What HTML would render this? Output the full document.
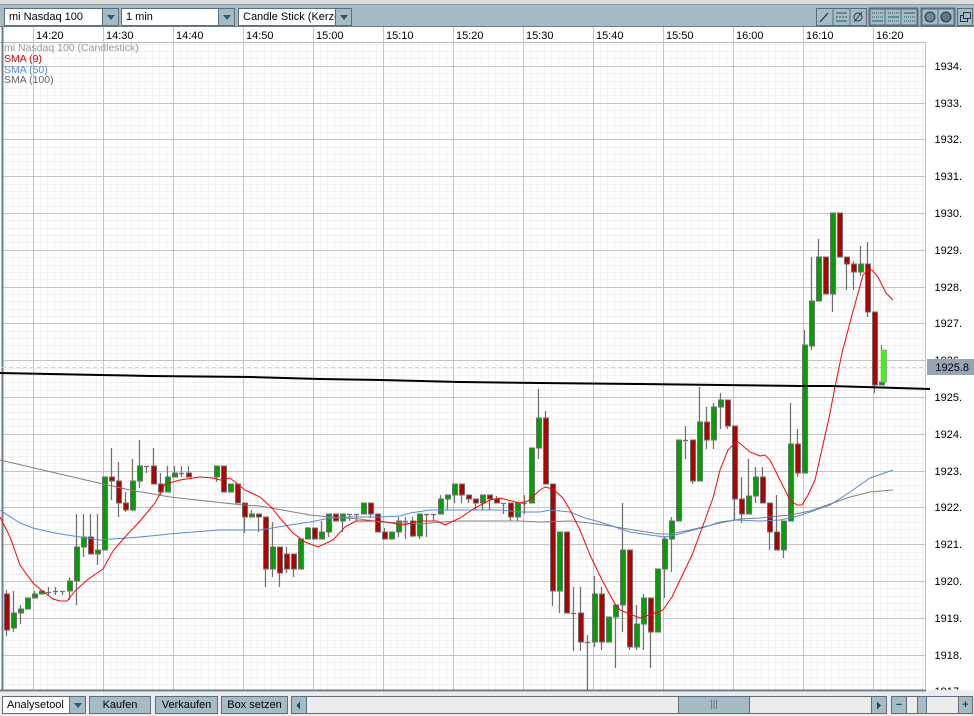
<!DOCTYPE html>
<html><head><meta charset="utf-8"><style>
*{margin:0;padding:0;box-sizing:border-box}
body{width:974px;height:716px;overflow:hidden;background:#ececec;font-family:"Liberation Sans",sans-serif;font-size:11px;position:relative}
.a{position:absolute}
.dd{position:absolute;top:8px;height:18px;background:#fff;border:1px solid #5c6c7c;font-size:11px;line-height:16px;padding-left:4px;color:#000;overflow:hidden;white-space:nowrap}
.dd .ar{position:absolute;right:0;top:0;width:16px;height:16px;background:#a6bcc4;border-left:1px solid #5c6c7c}
.dd .ar:after{content:"";position:absolute;left:4px;top:6px;border-left:4px solid transparent;border-right:4px solid transparent;border-top:5px solid #2a5a70}
.btn{position:absolute;top:696px;height:18px;background:#a6bcc4;border:1px solid #5c6c7c;text-align:center;line-height:16px;font-size:11px}
</style></head><body>
<div class="a" style="left:0;top:0;width:974px;height:5px;background:#dcdcdc;border-bottom:1px solid #8a9aa6"></div>
<div class="a" style="left:0;top:5px;width:974px;height:22px;background:#a6bcc4;border-bottom:1px solid #6c7c8a"></div>
<div class="dd" style="left:4px;width:115px">mi Nasdaq 100<div class="ar"></div></div>
<div class="dd" style="left:121px;width:114px">1 min<div class="ar"></div></div>
<div class="dd" style="left:238px;width:114px">Candle Stick (Kerze<div class="ar"></div></div>
<svg class="a" style="left:815px;top:7px" width="159" height="20">
<rect x="1.5" y="1.5" width="50" height="17" fill="none" stroke="#5c6c7c"/>
<line x1="18" y1="2" x2="18" y2="18" stroke="#5c6c7c"/><line x1="35" y1="2" x2="35" y2="18" stroke="#5c6c7c"/>
<line x1="5" y1="15" x2="13" y2="6" stroke="#1a3a50" stroke-width="1.3"/>
<line x1="21" y1="6" x2="32" y2="6" stroke="#1a5a70"/><line x1="21" y1="10" x2="32" y2="10" stroke="#1a5a70" stroke-dasharray="2 1"/><line x1="21" y1="14" x2="32" y2="14" stroke="#1a5a70"/>
<circle cx="43" cy="10" r="4" fill="none" stroke="#1a3a50"/><line x1="39" y1="15" x2="47" y2="5" stroke="#1a3a50"/>
<rect x="54.5" y="1.5" width="48" height="17" fill="#a6bcc4" stroke="#5c6c7c" stroke-width="2"/>
<line x1="70" y1="2" x2="70" y2="18" stroke="#5c6c7c"/><line x1="86" y1="2" x2="86" y2="18" stroke="#5c6c7c"/>
<g stroke="#1a5a70"><line x1="57" y1="6" x2="68" y2="6" stroke-dasharray="1 1"/><line x1="57" y1="10" x2="68" y2="10" stroke-dasharray="1 1"/><line x1="57" y1="14" x2="68" y2="14"/>
<line x1="73" y1="6" x2="84" y2="6" stroke-dasharray="1 1"/><line x1="73" y1="10" x2="84" y2="10"/><line x1="73" y1="14" x2="84" y2="14" stroke-dasharray="1 1"/>
<line x1="89" y1="6" x2="100" y2="6"/><line x1="89" y1="10" x2="100" y2="10" stroke-dasharray="1 1"/><line x1="89" y1="14" x2="100" y2="14" stroke-dasharray="1 1"/></g>
<rect x="106.5" y="1.5" width="33" height="17" fill="#a6bcc4" stroke="#5c6c7c" stroke-width="2"/>
<line x1="123" y1="2" x2="123" y2="18" stroke="#5c6c7c"/>
<circle cx="115" cy="10" r="5" fill="#6a8a9a" stroke="#1a3a50"/><circle cx="131" cy="10" r="5" fill="#5a7a8a" stroke="#1a3a50"/>
<rect x="142.5" y="1.5" width="15" height="17" fill="#a6bcc4" stroke="#5c6c7c"/>
<rect x="145.5" y="8.5" width="7" height="6" fill="none" stroke="#1a3a50"/><rect x="148.5" y="5.5" width="7" height="6" fill="#a6bcc4" stroke="#1a3a50"/>
</svg>
<svg class="a" style="left:0;top:27px" width="974" height="665" id="ch"></svg>
<div class="a" style="left:4px;top:43px;color:#999;font-size:10.5px;line-height:10.8px">mi Nasdaq 100 (Candlestick)<br><span style="color:#e00000">SMA (9)</span><br><span style="color:#5a8ad8">SMA (50)</span><br><span style="color:#666">SMA (100)</span></div>
<div class="dd" style="left:2px;top:696px;width:84px;height:18px">Analysetool<div class="ar"></div></div>
<div class="btn" style="left:89px;width:62px">Kaufen</div>
<div class="btn" style="left:155px;width:63px">Verkaufen</div>
<div class="btn" style="left:221px;width:67px">Box setzen</div>
<div class="btn" style="left:291px;width:16px"></div>
<svg class="a" style="left:296px;top:701px" width="6" height="9"><path d="M4 0.5 L0.5 4.5 L4 8.5Z" fill="#1a4a60"/></svg>
<div class="a" style="left:307px;top:696px;width:580px;height:18px;border:1px solid #5c6c7c;border-left:none;background:#ececec"></div>
<div class="a" style="left:678px;top:696px;width:72px;height:18px;background:#a6bcc4;border:1px solid #5c6c7c;text-align:center;line-height:15px;color:#5c6c7c;font-size:10px">|||</div>
<div class="btn" style="left:871px;width:16px"></div>
<svg class="a" style="left:876px;top:701px" width="6" height="9"><path d="M1 0.5 L5 4.5 L1 8.5Z" fill="#1a4a60"/></svg>
<div class="a" style="left:891px;top:696px;width:82px;height:18px;border:1px solid #5c6c7c;background:#ececec"></div>
<div class="btn" style="left:891px;width:16px;font-weight:bold;color:#1a4a60">−</div>
<div class="btn" style="left:917px;width:10px"></div>
<div class="btn" style="left:958px;width:15px;font-weight:bold;color:#1a4a60">+</div>
<script>
var s='';
var Y=function(p){return 213+(1930-p)*36.8-27;};
s+='<rect x="0" y="0" width="974" height="665" fill="#fff"/>';
for(var x=5;x<926;x+=7)s+='<line x1="'+x+'.5" y1="15" x2="'+x+'.5" y2="663" stroke="#f2f2f2"/>';
for(var p=1935;p>1916;p-=0.2){var y=Math.round(Y(p));if(y>15&&y<664)s+='<line x1="2" y1="'+y+'.5" x2="925" y2="'+y+'.5" stroke="#f0f0f0"/>';}
for(var p=1935;p>=1917;p--){var y=Math.round(Y(p));if(y>15&&y<664)s+='<line x1="2" y1="'+y+'.5" x2="925" y2="'+y+'.5" stroke="#c4c4c4"/>';
 if(p<1935&&y>20){s+='<text x="962" y="'+(y+4)+'" text-anchor="end" font-size="11" font-family="Liberation Sans">'+p+'.</text>';}}
s+='<line x1="0" y1="15.5" x2="926" y2="15.5" stroke="#b8b8b8"/>';
var tl=['14:20','14:30','14:40','14:50','15:00','15:10','15:20','15:30','15:40','15:50','16:00','16:10','16:20'];
for(var i=0;i<13;i++){var x=33+70*i;s+='<line x1="'+x+'.5" y1="0" x2="'+x+'.5" y2="663" stroke="#c4c4c4"/>';
 s+='<text x="'+(x+3)+'" y="12" font-size="11" font-family="Liberation Sans">'+tl[i]+'</text>';}
s+='<line x1="2.5" y1="0" x2="2.5" y2="663" stroke="#6c7c8a" stroke-width="2"/>';
s+='<line x1="925.5" y1="15" x2="925.5" y2="663" stroke="#b8c8d0"/>';
s+='<line x1="0" y1="663.5" x2="926" y2="663.5" stroke="#6c7c8a" stroke-width="2"/>';
var yp=367-27;s+='<line x1="2" y1="'+yp+'.5" x2="925" y2="'+yp+'.5" stroke="#c8d4e4" stroke-dasharray="4 3"/>';
var C=[[0,594,630,590,636,'r'],[1,628,613,591,632],[2,613,609,605,624],[3,609,598,598,609],[4,598,594,591,598],[5,594,591,591,594],[6,592,592,587,595],[7,591,591,587,595],[8,591,591,591,595],
[9,591,581,577,600],[10,581,547,514,605],[11,547,537,514,557],[12,537,554,514,554],[13,554,550,514,565],[14,550,477,477,550],[15,477,481,448,500],[16,481,503,462,517],[17,503,510,492,512],[18,510,481,459,511],[19,481,466,440,488],[20,466,466,466,473],[21,466,484,448,484],[22,484,492,473,495],[23,492,477,466,492],[24,477,473,466,477],[25,473,473,466,477],[26,473,477,466,477],
[30,477,466,466,482],[31,466,492,466,492],[32,492,484,484,492],[33,484,503,484,503],[34,503,517,503,533],[35,517,514,510,517],[36,514,517,514,532],[37,517,569,517,587],[38,569,547,522,577],[39,547,573,547,587],[40,554,569,547,573],[41,554,569,554,577],[42,569,539,539,569],[43,539,528,527,539],[44,528,539,528,539],
[45,539,532,521,539],[46,532,514,514,537],[47,514,521,514,521],[48,521,514,514,532],[49,514,514,514,521],[50,514,514,514,521],[51,514,503,503,514],[52,503,514,503,518],[53,514,532,514,532],[54,532,539,528,539],[55,539,532,532,539],[56,532,521,517,537],[57,521,521,517,539],[58,521,536,517,537],[59,536,514,514,539],[60,514,514,514,537],[61,514,514,514,521],[62,514,499,495,514],[63,499,495,495,510],
[64,495,484,484,503],[65,484,495,484,503],[66,495,499,495,503],[67,499,503,499,510],[68,503,495,495,510],[69,495,499,495,510],[70,499,503,496,503],[71,503,503,503,514],[72,503,517,503,521],[73,517,503,503,521],[74,503,503,495,514],[75,503,448,448,503],[76,448,418,389,459],[77,418,484,411,484],[78,484,591,484,606],[79,591,532,532,613],[80,532,613,532,613],[81,613,613,587,651],[82,613,642,587,651],[83,642,642,635,690],
[84,642,594,576,647],[85,594,642,587,650],[86,642,617,617,642],[87,617,605,605,668],[88,605,550,503,632],[89,550,647,550,650],[90,647,624,605,650],[91,624,598,594,650],[92,598,632,598,668],[93,632,569,569,632],[94,569,539,536,598],[95,539,521,517,572],[96,521,440,440,521],[97,440,440,426,459],[98,440,481,440,484],[99,481,422,387,481],[100,422,440,407,449],[101,440,407,403,449],[102,407,400,393,429],[103,400,426,400,429],
[104,426,499,426,521],[105,499,514,477,523],[106,514,496,459,514],[107,496,477,467,503],[108,477,503,467,503],[109,503,532,503,550],[110,532,550,495,550],[111,550,521,521,558],[112,521,444,403,521],[113,444,473,429,477],[114,473,345,330,473],[115,346,301,257,350],[116,301,257,239,301],[117,257,294,257,294],[118,294,213,213,312],[119,213,257,213,257],[120,257,264,257,290],[121,264,272,261,290],[122,272,264,246,276],[123,264,312,242,317],[124,312,385,312,393],[125,385,382,345,385]];
C.forEach(function(d){var x=6+7*d[0],o=d[1]-27,c=d[2]-27,h=d[3]-27,l=d[4]-27;var red=d[5]=='r'||c>o;
 s+='<line x1="'+(x+.5)+'" y1="'+h+'" x2="'+(x+.5)+'" y2="'+l+'" stroke="#707070" stroke-width="1.2"/>';
 var t=Math.min(o,c),b=Math.max(o,c);
 if(b-t<1)s+='<line x1="'+(x-2)+'" y1="'+(t+.5)+'" x2="'+(x+3)+'" y2="'+(t+.5)+'" stroke="#707070" stroke-width="1.3"/>';
 else s+='<rect x="'+(x-1.5)+'" y="'+t+'" width="5" height="'+(b-t)+'" fill="'+(red?'#b00000':'#00a000')+'" stroke="#707070"/>';});
s+='<rect x="881.5" y="'+(350-27)+'" width="5" height="32" fill="#33ff00" stroke="#a0a0a0"/>';
function pl(a,col,w){var p='';for(var i=0;i<a.length;i+=2)p+=a[i]+','+(a[i+1]-27)+' ';return '<polyline points="'+p+'" fill="none" stroke="'+col+'" stroke-width="'+w+'"/>';}
s+=pl([0,460,30,467,60,474,90,481,103,484,130,490,170,497,215,502,243,505,260,506,310,515,330,517,360,519,380,522,420,524,440,522,460,521,490,521,520,521,540,522,570,521,590,523,610,526,640,531,660,534,670,534,690,530,720,523,740,519,760,518,790,515,810,511,830,504,850,497,870,492,893,490],'#808080',1);
s+=pl([0,510,20,523,33,528,50,532,67,535,80,537,100,540,113,539,140,537,160,535,180,533,220,530,260,530,290,525,310,522,330,518,350,517,380,517,400,516,410,513,430,510,500,510,520,512,540,512,550,510,570,512,585,518,600,522,615,527,630,532,650,535,665,537,675,535,690,531,705,527,720,522,735,520,760,521,780,520,795,517,810,512,830,505,850,492,870,478,893,470],'#5a8ad8',1);
s+=pl([0,517,10,537,20,565,33,583,40,589,53,599,60,601,67,601,75,591,87,580,103,569,113,551,125,537,140,521,155,503,165,484,180,480,200,477,213,478,220,480,230,478,245,490,260,497,272,508,280,518,293,533,305,542,318,547,333,540,345,527,356,521,380,521,403,525,420,521,437,521,445,525,460,518,475,508,490,500,500,498,520,503,528,501,540,490,545,487,553,489,563,498,570,510,580,530,590,555,602,580,615,604,620,610,640,618,655,613,663,610,672,597,680,580,692,555,705,520,713,498,720,470,728,450,737,441,750,452,760,456,765,455,770,460,780,480,790,500,797,505,802,505,808,495,815,480,829,418,835,387,842,353,852,315,863,275,868,270,872,270,878,277,886,293,893,300],'#ff0000',1);
s+=pl([0,373,100,375,150,376,250,377,320,379,380,380,460,382,540,383,640,384,720,385,800,386,830,386,930,389],'#000',2);
s+='<rect x="927" y="'+(359-27)+'" width="47" height="16" fill="#97a3b7"/><text x="969" y="'+(371-27)+'" text-anchor="end" font-size="11" font-family="Liberation Sans">1925.8</text>';
s+='<rect x="926" y="663" width="48" height="3" fill="#ececec"/>';
document.getElementById('ch').innerHTML=s;
</script>
</body></html>
